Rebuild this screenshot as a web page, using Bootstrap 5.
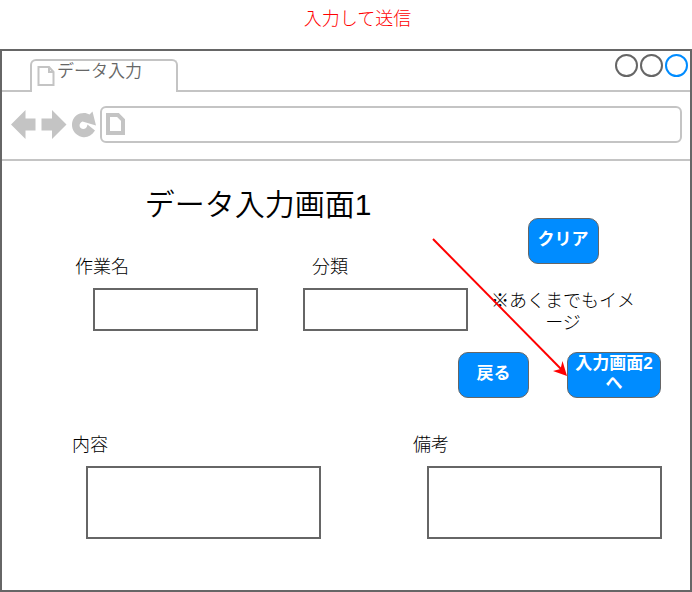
<!DOCTYPE html>
<html lang="ja">
<head>
<meta charset="utf-8">
<meta name="viewport" content="width=device-width, initial-scale=1">
<title>データ入力</title>
<link href="https://cdn.jsdelivr.net/npm/bootstrap@5.3.0/dist/css/bootstrap.min.css" rel="stylesheet">
<style>
  body { font-family: "Liberation Sans", "Noto Sans CJK JP", sans-serif; font-size: 18px; line-height: 22px; font-weight: 300; color: #000; background: #fff; }
  .caption-note { color: #f00; padding: 8px 0 19px 23px; }
  .browser { border: 2px solid #666; }
  .tab-strip { height: 41px; padding: 8px 2px 0 28px; box-shadow: inset 0 -2px #c4c4c4; }
  .page-tab { width: 148px; height: 33px; border: 2px solid #c4c4c4; border-bottom: 0; border-radius: 6px 6px 0 0; background: #fff; color: #666; font-size: 17px; font-weight: 350; padding: 0 0 0 5px; text-align: left; }
  .page-tab svg { margin-top: 4px; }
  .win-group { gap: 2px; }
  .win-btn { width: 23px; height: 23px; border: 2px solid #666; border-radius: 50%; background: none; padding: 0; margin-top: -5px; }
  .win-btn.active-win { border-color: #008cff; }
  .toolbar { height: 69px; padding: 13px 8px 16px 7px; border-bottom: 2px solid #c4c4c4; }
  .nav-tool { border: 0; background: none; padding: 0; width: 30px; line-height: 0; }
  .address { height: 37px; border: 2px solid #c4c4c4; border-radius: 6px; padding-left: 4px; margin-left: 1px; }
  .address input { border: 0; outline: 0; background: none; }
  .screen { position: relative; padding-bottom: 50px; }
  .upper { display: grid; grid-template-columns: 466fr 222fr; }
  .screen-title { font-size: 30px; line-height: 36px; font-weight: 350; padding: 26px 0 0 46px; }
  .field-row { display: grid; grid-template-columns: 1fr 1fr; gap: 45px; padding: 33px 0 0 91px; }
  .box { width: 100%; border: 2px solid #666; border-radius: 0; background: #fff; padding: 4px 8px; display: block; resize: none; }
  .label-gap { margin-bottom: 10px; }
  .label-out { margin-left: -18px; }
  .label-in { margin-left: 9px; }
  .side { padding: 57px 32px 0 0; }
  .act { min-width: 71px; height: 46px; border: 1px solid #666; border-radius: 10px; background: #008cff; color: #fff; font-size: 17px; line-height: 20px; font-weight: 700; padding: 0 4px 2px; }
  .act:hover { background: #007ae0; color: #fff; }
  .act-wide { width: 94px; }
  .side-note { width: 144px; margin-top: 26px; text-align: center; }
  .action-row { gap: 38px; padding: 18px 29px 0 0; }
  .lower { display: grid; grid-template-columns: 1fr 1fr; gap: 92px; padding: 36px 28px 0 70px; }
  .lower .box { height: 73px; }
  .lower .indent { padding-left: 14px; }
  .field-row .box { height: 43px; }
  .pointer { position: absolute; left: 430px; top: 74px; pointer-events: none; }
</style>
<script src="https://cdn.jsdelivr.net/npm/bootstrap@5.3.0/dist/js/bootstrap.bundle.min.js"></script>
</head>
<body class="min-vh-100 d-flex flex-column">
<p class="caption-note text-center mb-0">入力して送信</p>
<div class="browser flex-grow-1">
  <div class="tab-strip d-flex justify-content-between align-items-start">
    <button type="button" class="page-tab d-flex align-items-start">
      <svg width="20" height="22" viewBox="0 0 20 22" fill="none" stroke="#c4c4c4" stroke-width="2" aria-hidden="true"><path d="M1.500 2H12L16.500 7V20H1.500ZM12 2V7H16.500" /></svg>
      <span>データ入力</span>
    </button>
    <div class="win-group d-flex">
      <button type="button" class="win-btn" aria-label="最小化"></button>
      <button type="button" class="win-btn" aria-label="最大化"></button>
      <button type="button" class="win-btn active-win" aria-label="閉じる"></button>
    </div>
  </div>
  <div class="toolbar d-flex align-items-center">
    <button type="button" class="nav-tool" aria-label="戻る"><svg width="28" height="30" viewBox="0 0 28 30" fill="#c4c4c4"><path d="M1 15.500L15.500 1V9.500H25.500V21.500H15.500V30Z"/></svg></button>
    <button type="button" class="nav-tool" aria-label="進む"><svg width="28" height="30" viewBox="0 0 28 30" fill="#c4c4c4"><path d="M26.500 15.500L12 1V9.500H1.500V21.500H12V30Z"/></svg></button>
    <button type="button" class="nav-tool" aria-label="再読み込み"><svg width="28" height="30" viewBox="0 0 28 30" fill="#c4c4c4"><path d="M22.500 2.500L26 16.500L12.500 12.500C8.500 14 8.500 19.500 13 20C15.500 20 17 18.500 17.500 15.500L25 21.500C21.500 27 17 29 12 28C-1 25 -1 8 10 4.500C14 3.500 17 4 19.500 5.500Z"/></svg></button>
    <div class="address flex-grow-1 d-flex align-items-center">
      <svg width="20" height="24" viewBox="0 0 20 24" fill="none" stroke="#c4c4c4" stroke-width="4" aria-hidden="true"><path d="M2 3H12L17 8V21H2Z"/></svg>
      <input type="text" class="flex-grow-1" aria-label="アドレス">
    </div>
  </div>
  <form class="screen">
    <div class="upper">
      <div>
        <h1 class="screen-title text-center mb-0">データ入力画面1</h1>
        <div class="field-row">
          <div>
            <div class="label-gap label-out"><label for="task">作業名</label></div>
            <input id="task" type="text" class="box">
          </div>
          <div>
            <div class="label-gap label-in"><label for="kind">分類</label></div>
            <input id="kind" type="text" class="box">
          </div>
        </div>
      </div>
      <div class="side d-flex flex-column align-items-center">
        <button type="reset" class="act">クリア</button>
        <p class="side-note mb-0">※あくまでもイメージ</p>
      </div>
    </div>
    <div class="action-row d-flex justify-content-end">
      <button type="button" class="act">戻る</button>
      <button type="button" class="act act-wide">入力画面2へ</button>
    </div>
    <div class="lower">
      <div>
        <div class="label-gap"><label for="detail">内容</label></div>
        <div class="indent"><textarea id="detail" class="box"></textarea></div>
      </div>
      <div>
        <div class="label-gap"><label for="remarks">備考</label></div>
        <div class="indent"><textarea id="remarks" class="box"></textarea></div>
      </div>
    </div>
    <svg class="pointer" width="138" height="146" viewBox="0 0 138 146" aria-hidden="true"><path d="M1 4L131 136" stroke="#f00" stroke-width="2" fill="none"/><path d="M135 141L121 136L128.500 134L130.500 126Z" fill="#f00"/></svg>
  </form>
</div>
</body>
</html>
